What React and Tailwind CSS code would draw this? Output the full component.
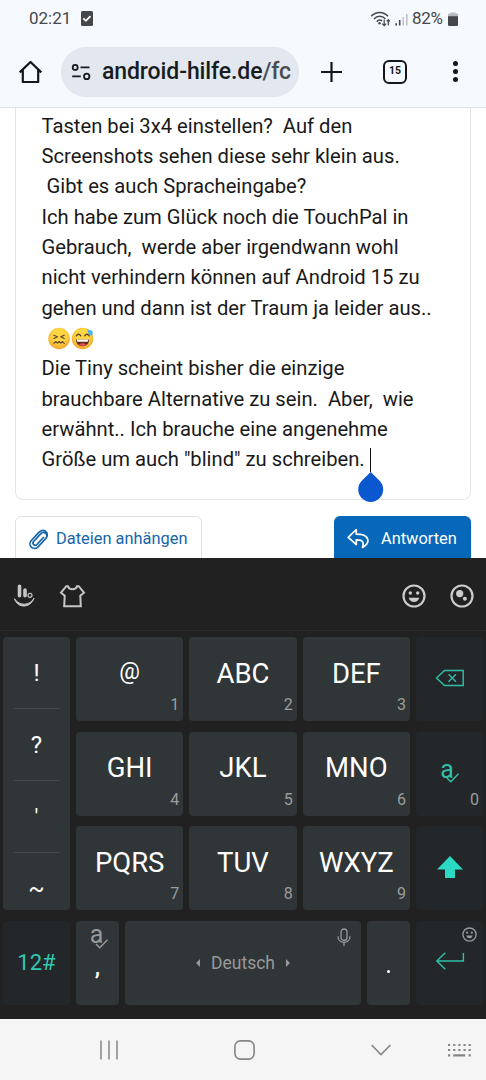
import React from 'react';

const lines = [
  { text: 'Tasten bei 3x4 einstellen?  Auf den' },
  { text: 'Screenshots sehen diese sehr klein aus.' },
  { text: ' Gibt es auch Spracheingabe?' },
  { text: 'Ich habe zum Glück noch die TouchPal in' },
  { text: 'Gebrauch,  werde aber irgendwann wohl' },
  { text: 'nicht verhindern können auf Android 15 zu' },
  { text: 'gehen und dann ist der Traum ja leider aus..' },
  { emoji: true },
  { text: 'Die Tiny scheint bisher die einzige' },
  { text: 'brauchbare Alternative zu sein.  Aber,  wie' },
  { text: 'erwähnt.. Ich brauche eine angenehme' },
  { text: 'Größe um auch "blind" zu schreiben. ', caret: true },
];

const rows = [
  [['@', '1'], ['ABC', '2'], ['DEF', '3']],
  [['GHI', '4'], ['JKL', '5'], ['MNO', '6']],
  [['PQRS', '7'], ['TUV', '8'], ['WXYZ', '9']],
];

function StatusBar() {
  return (
    <div className="h-9 pt-px pl-[29px] pr-[28px] flex items-center justify-between text-[17px] text-[#45484c]">
      <div className="flex items-center">
        <span className="w-[52px]">02:21</span>
        <svg width="12" height="15" viewBox="0 0 12 15">
          <rect width="12" height="15" rx="1.5" fill="#45474b" />
          <path d="M2.3 7.3l2.6 2.5 4.6-4.6" fill="none" stroke="#fff" strokeWidth="1.8" />
        </svg>
      </div>
      <div className="flex items-center">
        <svg width="38" height="18" viewBox="0 0 38 18" fill="none" stroke="#45474b">
          <path d="M1.2 6.3C6 1.2 13.3 1.2 18 6.3M4 9c3.3-3.5 8-3.5 11.3-.2M6.7 11.6c1.8-1.8 3.8-1.9 5.5-.8" strokeWidth="1.5" />
          <circle cx="9.5" cy="13.3" r="1.2" fill="#45474b" stroke="none" />
          <path d="M14.2 9.6v6M12.2 13.6l2 2 2-2M18.3 15.5v-6M16.7 11.4l1.6-1.8 1.6 1.8" strokeWidth="1.2" />
          <path d="M26.2 13.2v2.4M29.7 10v5.6" strokeWidth="1.6" />
          <path d="M33.2 7v8.6M36.8 4v11.6" stroke="#bcc0c5" strokeWidth="1.5" />
        </svg>
        <span className="ml-[4px] w-[36px] whitespace-nowrap tracking-[-0.3px]">82%</span>
        <svg width="10" height="14" viewBox="0 0 10 14">
          <path d="M0 2.8q0-1.2 1.2-1.2h1.5V.4h4.6v1.2h1.5Q10 1.6 10 2.8V5H0z" fill="#b6b9bd" />
          <path d="M0 4.3h10v8.5q0 1.2-1.2 1.2H1.2Q0 14 0 12.8z" fill="#45474b" />
        </svg>
      </div>
    </div>
  );
}

function BrowserBar() {
  return (
    <div className="h-[71px] flex items-center pl-[18px]">
      <svg width="25" height="24" viewBox="0 0 25 24" fill="none" stroke="#14171a" strokeWidth="2.2">
        <path d="M1.7 12.4L12.5 2l10.8 10.4M4.800 10v12h15.400V10" strokeLinejoin="round" />
      </svg>
      <div className="ml-[18px] w-[238px] h-[50px] rounded-full bg-[#e2e7f0] flex items-center pl-[10px]">
        <svg width="20" height="18" viewBox="0 0 20 18" fill="none" stroke="#191c1f" strokeWidth="1.8">
          <circle cx="4.2" cy="4.4" r="2.5" />
          <path d="M9.5 4.4h9M1.2 13.4h8.600" />
          <circle cx="15.7" cy="13.4" r="2.7" />
        </svg>
        <div className="ml-[11px] whitespace-nowrap text-[23px] font-medium leading-[34px] tracking-[-0.1px] text-[#191c1f]">
          android-hilfe.de<span className="text-[#494d52]">/fc</span>
        </div>
      </div>
      <svg className="ml-[22px]" width="21" height="22" viewBox="0 0 21 22" stroke="#14171a" strokeWidth="2.2">
        <path d="M0 11h21M10.5 1v20" />
      </svg>
      <div className="ml-[41px] w-[24px] h-[24px] border-2 border-[#14171a] rounded-[6px] flex items-center justify-center text-[10.5px] leading-none font-bold text-[#14171a]">
        15
      </div>
      <div className="ml-[46px] flex flex-col gap-[3px]">
        <span className="w-[5px] h-[5px] rounded-full bg-[#14171a]"></span>
        <span className="w-[5px] h-[5px] rounded-full bg-[#14171a]"></span>
        <span className="w-[5px] h-[5px] rounded-full bg-[#14171a]"></span>
      </div>
    </div>
  );
}

function Emojis() {
  return (
    <svg className="ml-[6.500px]" width="46" height="23" viewBox="0 0 47 23" fill="none">
      <defs>
        <radialGradient id="face" cx="50%" cy="38%" r="62%">
          <stop offset="0.5" stopColor="#fdd642" />
          <stop offset="1" stopColor="#f2a32c" />
        </radialGradient>
      </defs>
      <circle cx="11.3" cy="11.5" r="11" fill="url(#face)" />
      <g stroke="#5d4037" strokeWidth="1.2" strokeLinecap="round" strokeLinejoin="round">
        <path d="M6 8.200l3.600 1.600-3.600 1.800M16.600 8.200L13 9.800l3.600 1.800" />
        <path d="M6 16.500l1.800-1.900 1.800 1.700 1.700-1.700 1.800 1.700 1.700-1.700 1.800 1.900" />
      </g>
      <circle cx="35.3" cy="11.5" r="11" fill="url(#face)" />
      <path d="M29 8.800q2.300-3.200 4.500 0M37.500 8.800q2.300-3.200 4.500 0" stroke="#5d4037" strokeWidth="1.400" strokeLinecap="round" />
      <path d="M28.500 12.500h13.600q-.3 6.800-6.800 6.800t-6.800-6.800z" fill="#5b2b20" />
      <path d="M29.300 12.500h12l-.6 2.300H29.900z" fill="#fff" />
      <path d="M31.500 17.700q3.800-2.500 7.600 0-3.800 2.700-7.600 0z" fill="#ee4e55" />
      <path d="M40.300 2.500q6.200-.3 5.400 4.200-.7 2.300-2.900 1.400-1.700-1-2.500-5.600z" fill="#45b4e8" />
    </svg>
  );
}

function Page() {
  return (
    <div className="h-[451px] overflow-hidden bg-white px-[15px] border-t border-[#dcdfe3]">
      <div className="h-[392px] w-[456px] border border-t-0 border-[#e4e5e7] rounded-b-lg pl-[25.500px] pt-[2.500px] text-[20.220px] text-[#191919]">
        {lines.map((line, i) => (
          <div key={i} className="h-[30.360px] flex items-center whitespace-pre">
            {line.emoji ? <Emojis /> : <span>{line.text}</span>}
            {line.caret && (
              <span className="relative w-[1.500px] h-[24px] bg-[#111]">
                <svg className="absolute left-[-12px] top-[24px]" width="26" height="30" viewBox="0 0 26 30">
                  <path d="M12.700 0L21.600 8.700A12.500 12.500 0 1 1 3.800 8.700z" fill="#0b57d0" />
                </svg>
              </span>
            )}
          </div>
        ))}
      </div>
      <div className="mt-4 w-[456px] flex justify-between text-[16.400px]">
        <button className="h-[50px] w-[187px] border border-[#dfe0e2] rounded-md flex items-start pt-[10px] pl-[13px] text-[#1565a8]">
          <svg className="mt-[2px] mr-[7px]" width="20" height="21" viewBox="0 0 20 21" fill="none" stroke="#1565a8" strokeWidth="1.7" strokeLinecap="round">
            <path d="M14.400 8.500l-6.500 7a2.200 2.200 0 0 1-3.300-3l7.300-7.900a3.400 3.400 0 0 1 5 4.700l-8.100 8.800a4.600 4.600 0 0 1-6.700-6.300l7.500-8.200C11 2.100 13.600.2 16.600 2.300c2.400 2 2 4.900.4 6.800" />
          </svg>
          <span>Dateien anhängen</span>
        </button>
        <button className="h-[50px] w-[137px] bg-[#0767b9] rounded-md flex items-start pt-[11px] pl-[13px] text-white">
          <svg className="mt-[1px] mr-[11px]" width="23" height="21" viewBox="0 0 23 21" fill="none" stroke="#fff" strokeWidth="1.7" strokeLinejoin="round">
            <path d="M9.300 1.500L1.200 9.300l8.100 7.200v-4.600c6.200-.2 8 2 6.200 7.500 7.600-4.200 8.300-13.300-6.200-13.300z" />
          </svg>
          <span>Antworten</span>
        </button>
      </div>
    </div>
  );
}

function Smiley({ size, color }) {
  return (
    <svg width={size} height={size} viewBox="0 0 24 24" fill="none">
      <circle cx="12" cy="12" r="10.500" stroke={color} strokeWidth="2.200" />
      <circle cx="8.300" cy="9" r="1.700" fill={color} />
      <circle cx="15.700" cy="9" r="1.700" fill={color} />
      <path d="M6.700 13.700h10.600q-1.500 4.300-5.300 4.300t-5.300-4.300z" fill={color} />
    </svg>
  );
}

function Toolbar() {
  return (
    <div className="h-[73px] flex items-center pl-[13px] pr-[12px] pt-[3px] border-b border-[#2a2b2c]">
      <svg width="22" height="23" viewBox="0 0 22 23" fill="none" stroke="#c6c6c6">
        <path d="M6.500 2.200v9.500M12 6v5.700" strokeWidth="3.600" strokeLinecap="round" />
        <circle cx="17" cy="11.300" r="2" strokeWidth="1.200" />
        <path d="M1.500 14.700c4.500 7.500 15.500 7.300 19.500-.5-3.500 10.200-16.500 10.500-19.500.5z" fill="#c6c6c6" strokeWidth="1" />
      </svg>
      <svg className="ml-[24px]" width="27" height="24" viewBox="0 0 27 24" fill="none" stroke="#c6c6c6" strokeWidth="2">
        <path d="M9 2.200c1 4 8 4 9 0h1.700l5.300 6.500-3.700 3.100.5 10.400H5.200l.5-10.400L2 8.700l5.300-6.500z" />
      </svg>
      <div className="ml-auto flex gap-[24px]">
        <Smiley size={24} color="#cccccc" />
        <svg width="24" height="24" viewBox="0 0 24 24" fill="none">
          <circle cx="12" cy="12" r="10.500" stroke="#ccc" strokeWidth="2.200" />
          <circle cx="9.700" cy="9.600" r="3.600" fill="#ccc" />
          <circle cx="14.900" cy="14.800" r="2" fill="#ccc" />
        </svg>
      </div>
    </div>
  );
}

function SpellMark({ color }) {
  return (
    <span className="flex items-center" style={{ color }}>
      <span className="text-[25px] leading-none">a</span>
      <svg className="-ml-[8px] mt-[18px]" width="13" height="10" viewBox="0 0 13 10" fill="none" stroke="currentColor" strokeWidth="1.5">
        <path d="M1 5l3.800 3.800 7.700-8" />
      </svg>
    </span>
  );
}

function Key({ label, digit }) {
  return (
    <button className="relative bg-[#303537] rounded flex items-center justify-center pb-[11px] text-white text-[27.500px]">
      <span className={label === '@' ? 'text-[23px] pb-[3px]' : ''}>{label}</span>
      <span className="absolute right-[4px] bottom-[4px] text-[16px] text-[#9b9d9e]">{digit}</span>
    </button>
  );
}

function Keyboard() {
  return (
    <div className="h-[461px] bg-[#212121]">
      <Toolbar />
      <div className="mt-[6px] mx-[3px] grid grid-cols-[67px_1fr_1fr_1fr_67px] grid-rows-[84px_84px_84px] gap-x-[6px] gap-y-[10.500px]">
        <div className="row-span-3 bg-[#303537] rounded flex flex-col items-center text-[24px] text-white">
          <span className="h-[72px] w-[46px] border-b border-[#454a4c] flex items-center justify-center">!</span>
          <span className="h-[72px] w-[46px] border-b border-[#454a4c] flex items-center justify-center">?</span>
          <span className="h-[72px] w-[46px] border-b border-[#454a4c] flex items-center justify-center text-[22px]">'</span>
          <span className="h-[57px] flex items-center pt-[14px]">~</span>
        </div>
        {rows[0].map(([label, digit]) => <Key key={digit} label={label} digit={digit} />)}
        <button className="bg-[#232729] rounded flex items-center justify-center pb-[3px]">
          <svg width="30" height="18" viewBox="0 0 30 18" fill="none" stroke="#32bfa8" strokeWidth="1.4">
            <path d="M1.500 9L9.500 1.500h18.700v15H9.500zM13.500 5.200l7.500 7.500M21 5.200l-7.500 7.500" />
          </svg>
        </button>
        {rows[1].map(([label, digit]) => <Key key={digit} label={label} digit={digit} />)}
        <button className="relative bg-[#232729] rounded flex items-center justify-center pb-[9px]">
          <SpellMark color="#32bfa8" />
          <span className="absolute right-[4px] bottom-[4px] text-[16px] text-[#9b9d9e]">0</span>
        </button>
        {rows[2].map(([label, digit]) => <Key key={digit} label={label} digit={digit} />)}
        <button className="bg-[#232729] rounded flex items-center justify-center pb-[3px]">
          <svg width="26" height="22" viewBox="0 0 26 22">
            <path d="M13 0l13 13.500h-8V22H8v-8.500H0z" fill="#2bd9c5" />
          </svg>
        </button>
      </div>
      <div className="mt-[10.500px] mx-[3px] h-[84px] flex gap-[6px]">
        <button className="w-[67px] bg-[#232729] rounded text-[22px] text-[#2fc9b2]">12#</button>
        <button className="w-[43px] bg-[#303537] rounded flex flex-col items-center text-white text-[24px]">
          <span className="h-[29px] pl-[3px]"><SpellMark color="#97999a" /></span>
          <span className="leading-[34px] font-medium">,</span>
        </button>
        <button className="relative flex-1 bg-[#303537] rounded flex items-center justify-center text-[17.500px] text-[#97999a] pt-[1px]">
          <svg width="4" height="8" viewBox="0 0 4 8"><path d="M4 0v8L0 4z" fill="#97999a" /></svg>
          <span className="mx-[11px]">Deutsch</span>
          <svg width="4" height="8" viewBox="0 0 4 8"><path d="M0 0v8l4-4z" fill="#97999a" /></svg>
          <svg className="absolute right-[10px] top-[7px]" width="14" height="18" viewBox="0 0 14 18" fill="none" stroke="#97999a" strokeWidth="1.3">
            <rect x="4" y="1" width="6" height="11.500" rx="3" />
            <path d="M1 8.300c0 8 12 8 12 0M7 14.400V18" />
          </svg>
        </button>
        <button className="w-[43px] bg-[#303537] rounded flex justify-center items-start pt-[49px]">
          <span className="w-[3px] h-[3px] rounded-full bg-white"></span>
        </button>
        <button className="relative w-[67px] bg-[#232729] rounded flex items-center justify-center pb-[3px]">
          <svg width="30" height="18" viewBox="0 0 30 18" fill="none" stroke="#32bfa8" strokeWidth="1.4">
            <path d="M10.300 .8L1.800 9l8.500 8.200M1.800 9h26.600V1" />
          </svg>
          <span className="absolute right-[6px] top-[6px]"><Smiley size={15} color="#97999a" /></span>
        </button>
      </div>
    </div>
  );
}

function NavBar() {
  return (
    <div className="h-[61px] bg-[#f5f5f5] flex items-center pl-[99px] pr-[15px] text-[#858585]">
      <svg width="20" height="20" viewBox="0 0 20 20" stroke="currentColor" strokeWidth="1.5">
        <path d="M2 .5v19M10 .5v19M18 .5v19" />
      </svg>
      <svg className="ml-[115px]" width="21" height="20" viewBox="0 0 21 20" fill="none" stroke="currentColor" strokeWidth="1.6">
        <rect x=".9" y=".9" width="19.200" height="18.200" rx="5.500" />
      </svg>
      <svg className="ml-[116px]" width="20" height="12" viewBox="0 0 20 12" fill="none" stroke="currentColor" strokeWidth="1.6">
        <path d="M.6 1L10 10.500 19.400 1" />
      </svg>
      <svg className="ml-auto" width="24" height="14" viewBox="0 0 24 14" stroke="currentColor" fill="none" strokeWidth="2.2">
        <path d="M1 2h23M1 7h23" strokeDasharray="2.2 2.950" />
        <path d="M1 12.300h2.200M6.200 12.300h12M21.600 12.300h2.200" />
      </svg>
    </div>
  );
}

export default function App() {
  return (
    <div className="w-[486px] h-[1080px] overflow-hidden bg-[#f6f9fe] font-['Roboto',sans-serif]">
      <StatusBar />
      <BrowserBar />
      <Page />
      <Keyboard />
      <NavBar />
    </div>
  );
}
